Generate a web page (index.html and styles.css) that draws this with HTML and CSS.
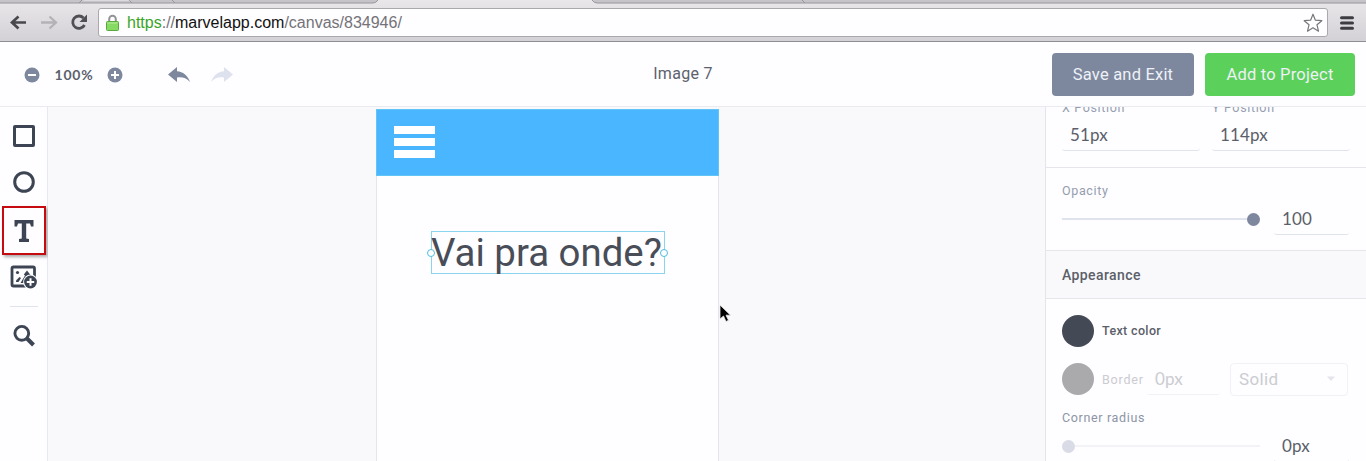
FILE: index.html
```html
<!DOCTYPE html>
<html lang="en">
<head>
<meta charset="utf-8">
<title>Image 7</title>
<link rel="stylesheet" href="styles.css">
</head>
<body>
<div class="window">
  <div class="browser">
    <svg class="tabs" width="1366" height="8" viewBox="0 0 1366 8">
      <path d="M0 0H377V1Q376 3 373 3H0ZM593 0H1366V3H597Q594 3 593 0Z" fill="#c6c4c8"/>
      <path d="M0 3H373Q376 3 378 0M592 0Q594 3 597 3H1366" fill="none" stroke="#98969b"/>
      <path d="M82 0L79 3M129 0L132 3M172 0L175 3M802 0L805 3" stroke="#98969b"/>
      <path d="M84 0H128L130 1H83Z" fill="#dcdadd"/>
    </svg>
    <div class="navbar">
      <svg class="nav-icons" width="98" height="29" viewBox="0 0 98 29">
        <path d="M26 14.500H13M18.500 8.500L12 14.500L18.500 20.500" fill="none" stroke="#48484c" stroke-width="2.700"/>
        <path d="M41 14.500H55M49.500 8.500L56 14.500L49.500 20.500" fill="none" stroke="#b4b2b7" stroke-width="2.300"/>
        <path d="M83.500 10A6.200 6.200 0 1 0 84.500 17" fill="none" stroke="#505054" stroke-width="2.800"/>
        <path d="M87 6.500V14H79.500Z" fill="#505054"/>
      </svg>
      <div class="address">
        <svg class="lock" width="13" height="18" viewBox="0 0 13 18">
          <path d="M3.200 8V5A3.300 3.300 0 0 1 9.800 5V8" fill="none" stroke="#929297" stroke-width="2"/>
          <rect x=".5" y="7.500" width="12" height="9" rx="1" fill="#86d962" stroke="#58aa3c"/>
          <path d="M1.500 9H11.500" stroke="#b8ef9d"/>
        </svg>
        <span class="url"><span class="scheme">https</span><span class="path">://</span>marvelapp.com<span class="path">/canvas/834946/</span></span>
        <svg class="star" width="20" height="20" viewBox="0 0 20 20"><path d="M10 1.200L12.400 7.200L18.800 7.700L14 11.800L15.500 18.200L10 14.800L4.500 18.200L6 11.800L1.200 7.700L7.600 7.200Z" fill="#fff" stroke="#77777b" stroke-width="1.200" stroke-linejoin="round"/></svg>
      </div>
      <svg class="menu" width="14" height="14" viewBox="0 0 14 14"><path d="M1.500 1.800H12.500M1.500 7H12.500M1.500 12.200H12.500" stroke="#3d3d41" stroke-width="3" stroke-linecap="round"/></svg>
    </div>
  </div>

  <header class="toolbar">
    <div class="tools">
      <svg width="16" height="16" viewBox="0 0 16 16"><circle cx="8" cy="8" r="7.500" fill="#7d879e"/><path d="M4 8H12" stroke="#fff" stroke-width="2"/></svg>
      <span class="zoom">100%</span>
      <svg width="16" height="16" viewBox="0 0 16 16"><circle cx="8" cy="8" r="7.500" fill="#7d879e"/><path d="M4 8H12M8 4V12" stroke="#fff" stroke-width="2"/></svg>
      <svg class="undo" width="22" height="16" viewBox="0 0 22 16"><path d="M9 0L0 7.500L9 15V10.500C14 9.800 18 10.500 22 15C19.500 8 15 4.700 9 4.200Z" fill="#7d879e"/></svg>
      <svg class="redo" width="22" height="16" viewBox="0 0 22 16"><path d="M13 0L22 7.500L13 15V10.500C8 9.800 4 10.500 0 15C2.500 8 7 4.700 13 4.200Z" fill="#dde2ee"/></svg>
    </div>
    <div class="title">Image 7</div>
    <div class="actions">
      <button class="button save">Save and Exit</button>
      <button class="button add">Add to Project</button>
    </div>
  </header>

  <main class="workspace">
    <nav class="sidebar">
      <svg class="tool-square" width="24" height="24" viewBox="0 0 24 24"><rect x="2.500" y="2.500" width="19" height="19" rx=".5" fill="none" stroke="#3d4554" stroke-width="3"/></svg>
      <svg class="tool-circle" width="24" height="24" viewBox="0 0 24 24"><circle cx="12" cy="12" r="9.300" fill="none" stroke="#3d4554" stroke-width="3"/></svg>
      <div class="tool-text">
        <svg width="20" height="22" viewBox="0 0 20 22"><path d="M.5 0H19.500V6.500H17L16 3.500H12.200V18.500L15 19V22H5V19L7.800 18.500V3.500H4L3 6.500H.5Z" fill="#3d4554"/></svg>
      </div>
      <svg class="tool-image" width="28" height="24" viewBox="0 0 28 24">
        <rect x="2" y="2" width="22.500" height="19" rx="1.500" fill="none" stroke="#3d4554" stroke-width="2.800"/>
        <circle cx="7.500" cy="7.500" r="1.600" fill="#3d4554"/>
        <path d="M6 15.500L9.500 12L11 13L8.500 17H6Z" fill="#3d4554"/>
        <path d="M17 5.500L20.500 10V12L14 18H10.500L15 10.500L13.800 9.500Z" fill="#3d4554"/>
        <circle cx="20.500" cy="17" r="7.400" fill="#fff"/><circle cx="20.500" cy="17" r="6.400" fill="#3d4554"/>
        <path d="M16.800 17H24.200M20.500 13.300V20.700" stroke="#fff" stroke-width="2"/>
      </svg>
      <div class="divider"></div>
      <svg class="tool-search" width="24" height="24" viewBox="0 0 24 24"><circle cx="9.800" cy="9.300" r="6.900" fill="none" stroke="#3d4554" stroke-width="2.900"/><path d="M15 14.500L21.500 21" stroke="#3d4554" stroke-width="4"/></svg>
    </nav>

    <section class="canvas">
      <div class="artboard">
        <div class="app-bar"><i></i><i></i><i></i></div>
        <div class="text-layer">Vai pra onde?<b class="handle left"></b><b class="handle right"></b></div>
      </div>
      <svg class="cursor" width="14" height="20" viewBox="0 0 14 20"><path d="M1 1V15L4.500 12L7 17.500L9.500 16.300L7 11.200H11.500Z" fill="#000" stroke="#e8e8ec" stroke-width=".8"/></svg>
    </section>

    <aside class="panel">
      <div class="position">
        <div class="field"><label>X Position</label><div class="input">51px</div></div>
        <div class="field"><label>Y Position</label><div class="input">114px</div></div>
      </div>
      <div class="opacity">
        <label>Opacity</label>
        <div class="slider-row">
          <div class="slider"><i class="knob"></i></div>
          <div class="input small">100</div>
        </div>
      </div>
      <h2>Appearance</h2>
      <div class="appearance">
        <div class="swatch-row"><i class="swatch"></i><span class="label-dark">Text color</span></div>
        <div class="swatch-row border-row">
          <i class="swatch grey"></i><span class="label-off">Border</span>
          <div class="input off">0px</div>
          <div class="select">Solid<svg width="10" height="6" viewBox="0 0 10 6"><path d="M1 .5H9L5 5Z" fill="#e4e5eb"/></svg></div>
        </div>
        <label class="radius-label">Corner radius</label>
        <div class="slider-row radius-row">
          <div class="slider faint"><i class="knob start"></i></div>
          <div class="input small">0px</div>
        </div>
      </div>
    </aside>
  </main>
</div>
</body>
</html>
```
FILE: styles.css
```css
* { box-sizing: border-box; }
body { margin: 0; font-family: Roboto, "Open Sans", sans-serif; color: #454b58; background: #fefdff; }
svg { display: block; flex: none; }
.window { width: 1366px; height: 461px; overflow: hidden; display: flex; flex-direction: column; }

.browser { height: 42px; flex: none; background: linear-gradient(#e9e7ea, #d3d1d5); border-bottom: 1px solid #8f8e93; }
.navbar { display: flex; align-items: center; height: 29px; }
.address { width: 1230px; height: 29px; border: 1px solid #aaa8ad; border-radius: 3px; background: #fefdff; display: flex; align-items: center; padding: 0 4px 0 7px; }
.url { margin-left: 8px; font: 16px/20px "Liberation Sans", Arial, sans-serif; color: #111; flex: 1; }
.scheme { color: #38a526; }
.path { color: #747378; }
.menu { margin-left: 12px; }

.toolbar { height: 65px; flex: none; border-bottom: 1px solid #e9ebf0; display: grid; grid-template-columns: 1fr auto 1fr; align-items: center; padding: 0 11px 0 24px; }
.tools { display: flex; align-items: center; padding-top: 1px; }
.zoom { width: 67px; padding-left: 1px; text-align: center; font: bold 14px/16px Lato, sans-serif; letter-spacing: .8px; color: #5b616e; }
.undo { margin-left: 45px; }
.redo { margin-left: 21px; }
.title { font-size: 16px; line-height: 20px; letter-spacing: .3px; color: #5c626d; margin: 0 13px 0 0; }
.actions { display: flex; justify-content: flex-end; gap: 11px; }
.button { height: 43px; border: 0; border-radius: 4px; padding: 1px 0 0; font: 16.5px/20px Roboto, sans-serif; letter-spacing: .2px; color: #eef1f7; }
.save { width: 142px; background: #7d889e; }
.add { width: 150px; background: #5bd05a; }

.workspace { flex: 1; min-height: 0; display: flex; }
.sidebar { width: 48px; flex: none; border-right: 1px solid #e6e9ef; display: flex; flex-direction: column; align-items: center; padding: 17px 0 0; }
.tool-circle { margin-top: 22px; }
.tool-text { width: 44px; height: 49px; margin: 12px 0 0 1px; border: 2px solid #c60b10; box-shadow: 2px 2px 3px #aaa; display: flex; align-items: center; justify-content: center; }
.tool-text svg { margin: 0 1px 0 0; }
.tool-image { margin: 10px 0 0 1px; }
.divider { width: 28px; height: 1px; margin-top: 17px; background: #dfe3eb; }
.tool-search { margin-top: 17px; }

.canvas { flex: 1; background: #f9f9fc; padding: 2px 0 0 328px; position: relative; }
.artboard { width: 343px; height: 352px; background: #fefdff; border: 1px solid #e4e6eb; border-width: 0 1px; }
.app-bar { height: 67px; margin: 0 -1px; padding: 16px 0 0 18px; background: #4ab6ff; border: 1px solid #62c3f5; display: flex; flex-direction: column; gap: 4px; }
.app-bar i { display: block; width: 41px; height: 8px; margin-left: -1px; background: #fff; }
.text-layer { position: relative; width: 234px; height: 43px; margin: 55px 0 0 54px; border: 1px solid #8bd4ed; font-size: 38.400px; line-height: 41px; text-indent: -1px; color: #484d58; white-space: nowrap; }
.handle { position: absolute; top: 17px; width: 8px; height: 8px; border: 1px solid #53bddf; border-radius: 50%; background: #fff; }
.left { left: -5px; }
.right { right: -4px; }
.cursor { position: absolute; left: 671px; top: 197px; }

.panel { width: 321px; flex: none; border-left: 1px solid #e2e5ec; overflow: hidden; color: #5b5f69; }
label { display: block; font-size: 12.500px; line-height: 16px; letter-spacing: .65px; color: #959eaf; }
.position { height: 61px; border-bottom: 1px solid #e5e7ed; padding-left: 16px; display: flex; gap: 12px; }
.field { width: 138px; margin-top: -7px; }
.field .input { margin-top: 2px; }
.input { height: 33px; padding: 1px 8px 0; font: 17px/32px Lato, sans-serif; letter-spacing: .1px; border-bottom: 1px solid #dfe3eb; border-radius: 3px; }
.opacity { height: 82px; padding: 15px 0 0 16px; }
.slider-row { display: flex; align-items: center; margin-top: 3px; height: 33px; }
.slider { width: 198px; height: 2px; margin: 1px 14px 0 0; background: #dfe3ed; display: flex; align-items: center; justify-content: flex-end; }
.knob { display: block; width: 13px; height: 13px; flex: none; border-radius: 50%; background: #7d889f; }
.small { width: 75px; }
h2 { margin: 0; height: 49px; padding-left: 16px; border: 1px solid #e5e7ed; border-width: 1px 0; background: #f9f9fc; font-size: 14px; line-height: 48px; font-weight: 500; letter-spacing: .4px; }
.appearance { padding: 16px 0 0 16px; }
.swatch-row { height: 32px; display: flex; align-items: center; font-size: 12.500px; letter-spacing: .35px; }
.swatch { width: 32px; height: 32px; border-radius: 50%; background: #444a55; margin-right: 8px; }
.grey { background: #aaa9ac; }
.label-dark { font-weight: 500; line-height: 16px; }
.border-row { margin-top: 16px; color: #cbccd1; }
.label-off { width: 45px; letter-spacing: .8px; }
.off { width: 73px; height: 32px; line-height: 30px; border-color: #f0f1f5; }
.select { width: 118px; height: 33px; margin-left: 10px; border: 1px solid #f1f2f6; border-radius: 4px; padding: 0 11px 0 8px; display: flex; justify-content: space-between; align-items: center; font-size: 17px; }
.radius-label { margin-top: 15px; color: #8c95a6; }
.radius-row { margin-top: 3px; }
.faint { background: #f3f3f7; justify-content: flex-start; }
.start { background: #d9dce6; }
```
